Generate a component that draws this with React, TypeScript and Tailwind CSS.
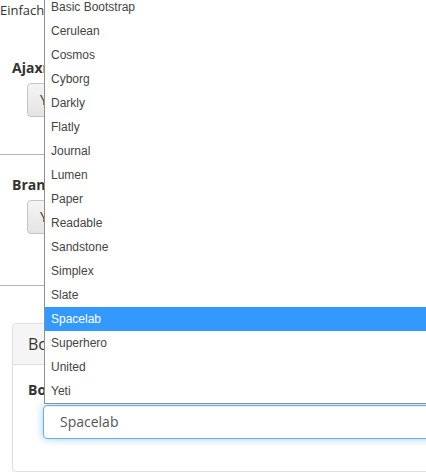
import React from 'react';

const THEMES = [
  'Basic Bootstrap',
  'Cerulean',
  'Cosmos',
  'Cyborg',
  'Darkly',
  'Flatly',
  'Journal',
  'Lumen',
  'Paper',
  'Readable',
  'Sandstone',
  'Simplex',
  'Slate',
  'Spacelab',
  'Superhero',
  'United',
  'Yeti',
];

const SELECTED = 'Spacelab';

const ToggleButton: React.FC<{ label: string }> = ({ label }) => (
  <div className="ml-[15px] h-[34px] w-[120px] rounded-[4px] border border-[#c4c4c4] bg-gradient-to-b from-[#f5f5f5] to-[#e4e4e4] px-[12px] text-[14px] leading-[32px] text-[#333]">
    {label}
  </div>
);

const App: React.FC = () => {
  return (
    <div className="relative h-[472px] w-[426px] overflow-hidden bg-white font-['Open_Sans',sans-serif] text-[#333]">
      <div className="h-[20px] text-[13px] leading-[20px] whitespace-nowrap">Einfach</div>

      <div className="pl-[12px]">
        <div className="mt-[38px] h-[20px] text-[14px] font-bold leading-[20px] whitespace-nowrap">Ajaxnavigation</div>
        <div className="mt-[5px]">
          <ToggleButton label="Ya" />
        </div>
      </div>

      <div className="mt-[37px] h-px w-full bg-[#a9b6c4]" />

      <div className="pl-[12px]">
        <div className="mt-[20px] h-[20px] text-[14px] font-bold leading-[20px] whitespace-nowrap">Brandlogo</div>
        <div className="mt-[5px]">
          <ToggleButton label="Ya" />
        </div>
      </div>

      <div className="mt-[51px] h-px w-full bg-[#a9b6c4]" />

      <div className="ml-[12px] mt-[37px] w-[520px] rounded-[4px] border border-[#dddddd]">
        <div className="h-[41px] rounded-t-[4px] border-b border-[#dddddd] bg-[#f5f5f5] px-[15px] text-[16px] leading-[40px] whitespace-nowrap">
          Bootstrap Theme
        </div>
        <div className="px-[15px] pt-[15px] pb-[32px]">
          <div className="h-[20px] text-[14px] font-bold leading-[20px] whitespace-nowrap">Bootstrap Theme</div>
          <div className="ml-[15px] mt-[5px] h-[34px] rounded-[4px] border border-[#66afe9] px-[16px] text-[14px] leading-[32px] text-[#555] shadow-[inset_0_1px_1px_rgba(0,0,0,0.075),0_0_8px_rgba(102,175,233,0.6)]">
            {SELECTED}
          </div>
        </div>
      </div>

      <ul className="absolute left-[44px] top-[-6px] w-[420px] border border-[#8f8f8f] bg-white font-['Liberation_Sans',sans-serif] text-[12px]">
        {THEMES.map(theme => (
          <li
            key={theme}
            className={`h-[24px] pl-[6px] leading-[24px] whitespace-nowrap ${
              theme === SELECTED ? 'bg-[#3399ff] text-white' : 'text-[#444]'
            }`}
          >
            {theme}
          </li>
        ))}
      </ul>
    </div>
  );
};

export default App;
